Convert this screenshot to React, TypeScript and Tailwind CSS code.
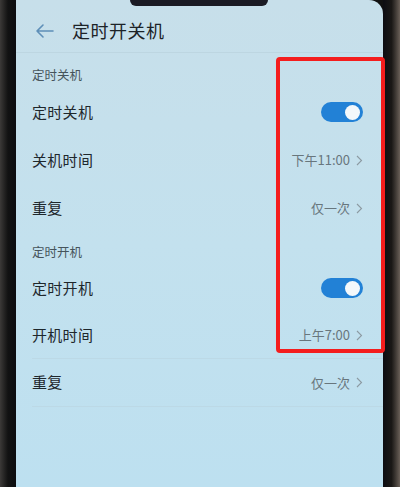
import React from "react";

const font = { fontFamily: '"Noto Sans CJK SC", "Noto Sans", sans-serif' };

function Toggle() {
  return (
    <div className="w-[42px] h-[20px] rounded-full bg-[#2281d6] flex items-center justify-end pr-[3px]">
      <div className="w-[15px] h-[15px] rounded-full bg-[#f4f8fb]" />
    </div>
  );
}

function Chevron() {
  return (
    <svg width="7" height="11" viewBox="0 0 7 11" className="ml-[6px]">
      <path d="M1 1 L5.5 5.5 L1 10" fill="none" stroke="#8c9aa2" strokeWidth="1.1" />
    </svg>
  );
}

function Row({ label, value, toggle, h, divider }: { label: string; value?: string; toggle?: boolean; h: string; divider?: boolean }) {
  return (
    <div className={`${h} flex items-center justify-between pr-[20px] ${divider ? "border-b border-[#bcd9e6]" : ""}`}>
      <span className="text-[15px] text-[#1e272c] tracking-[0.3px]">{label}</span>
      {toggle ? (
        <Toggle />
      ) : (
        <div className="flex items-center">
          <span className="text-[13px] text-[#68767d]">{value}</span>
          <Chevron />
        </div>
      )}
    </div>
  );
}

export default function App() {
  return (
    <div className="relative w-[400px] h-[487px] flex overflow-hidden bg-[#111]" style={font}>
      <div className="w-[16px] h-full bg-gradient-to-r from-[#3c3a38] via-[#121212] to-[#0c0c10]" />
      <div className="flex-1 h-full rounded-tr-[14px] bg-gradient-to-b from-[#c7dfea] via-[#c3e1ee] to-[#bde0f0] flex flex-col pl-[16px]">
        <div className="h-[53px] pt-[9px] flex items-center border-b border-[#bdd6e1] -ml-[16px] pl-[19px]">
          <svg width="20" height="16" viewBox="0 0 20 16">
            <path d="M18 8 H2 M8 2 L2 8 L8 14" fill="none" stroke="#5e8fb8" strokeWidth="1.6" strokeLinecap="round" strokeLinejoin="round" />
          </svg>
          <span className="ml-[17px] text-[18px] text-[#1c2328] tracking-[0.5px]">定时开关机</span>
        </div>
        <div className="h-[35px] pt-[10px] flex items-center">
          <span className="text-[12.5px] text-[#46545b]">定时关机</span>
        </div>
        <Row h="h-[48px]" label="定时关机" toggle />
        <Row h="h-[48px]" label="关机时间" value="下午11:00" />
        <Row h="h-[48px]" label="重复" value="仅一次" />
        <div className="h-[32px] pt-[8px] flex items-center">
          <span className="text-[12.5px] text-[#46545b]">定时开机</span>
        </div>
        <Row h="h-[48px]" label="定时开机" toggle />
        <Row h="h-[47px]" label="开机时间" value="上午7:00" divider />
        <Row h="h-[48px]" label="重复" value="仅一次" divider />
      </div>
      <div className="w-[17px] h-full bg-gradient-to-r from-[#0d0d12] via-[#1a1816] to-[#6a6058]" />
      <div className="absolute left-[130px] top-0 w-[138px] h-[6px] rounded-b-[8px] bg-[#1b1b24]" />
      <div className="absolute left-[276px] top-[57px] w-[109px] h-[296px] border-[4px] border-[#f41d1d] rounded-[4px]" />
    </div>
  );
}
